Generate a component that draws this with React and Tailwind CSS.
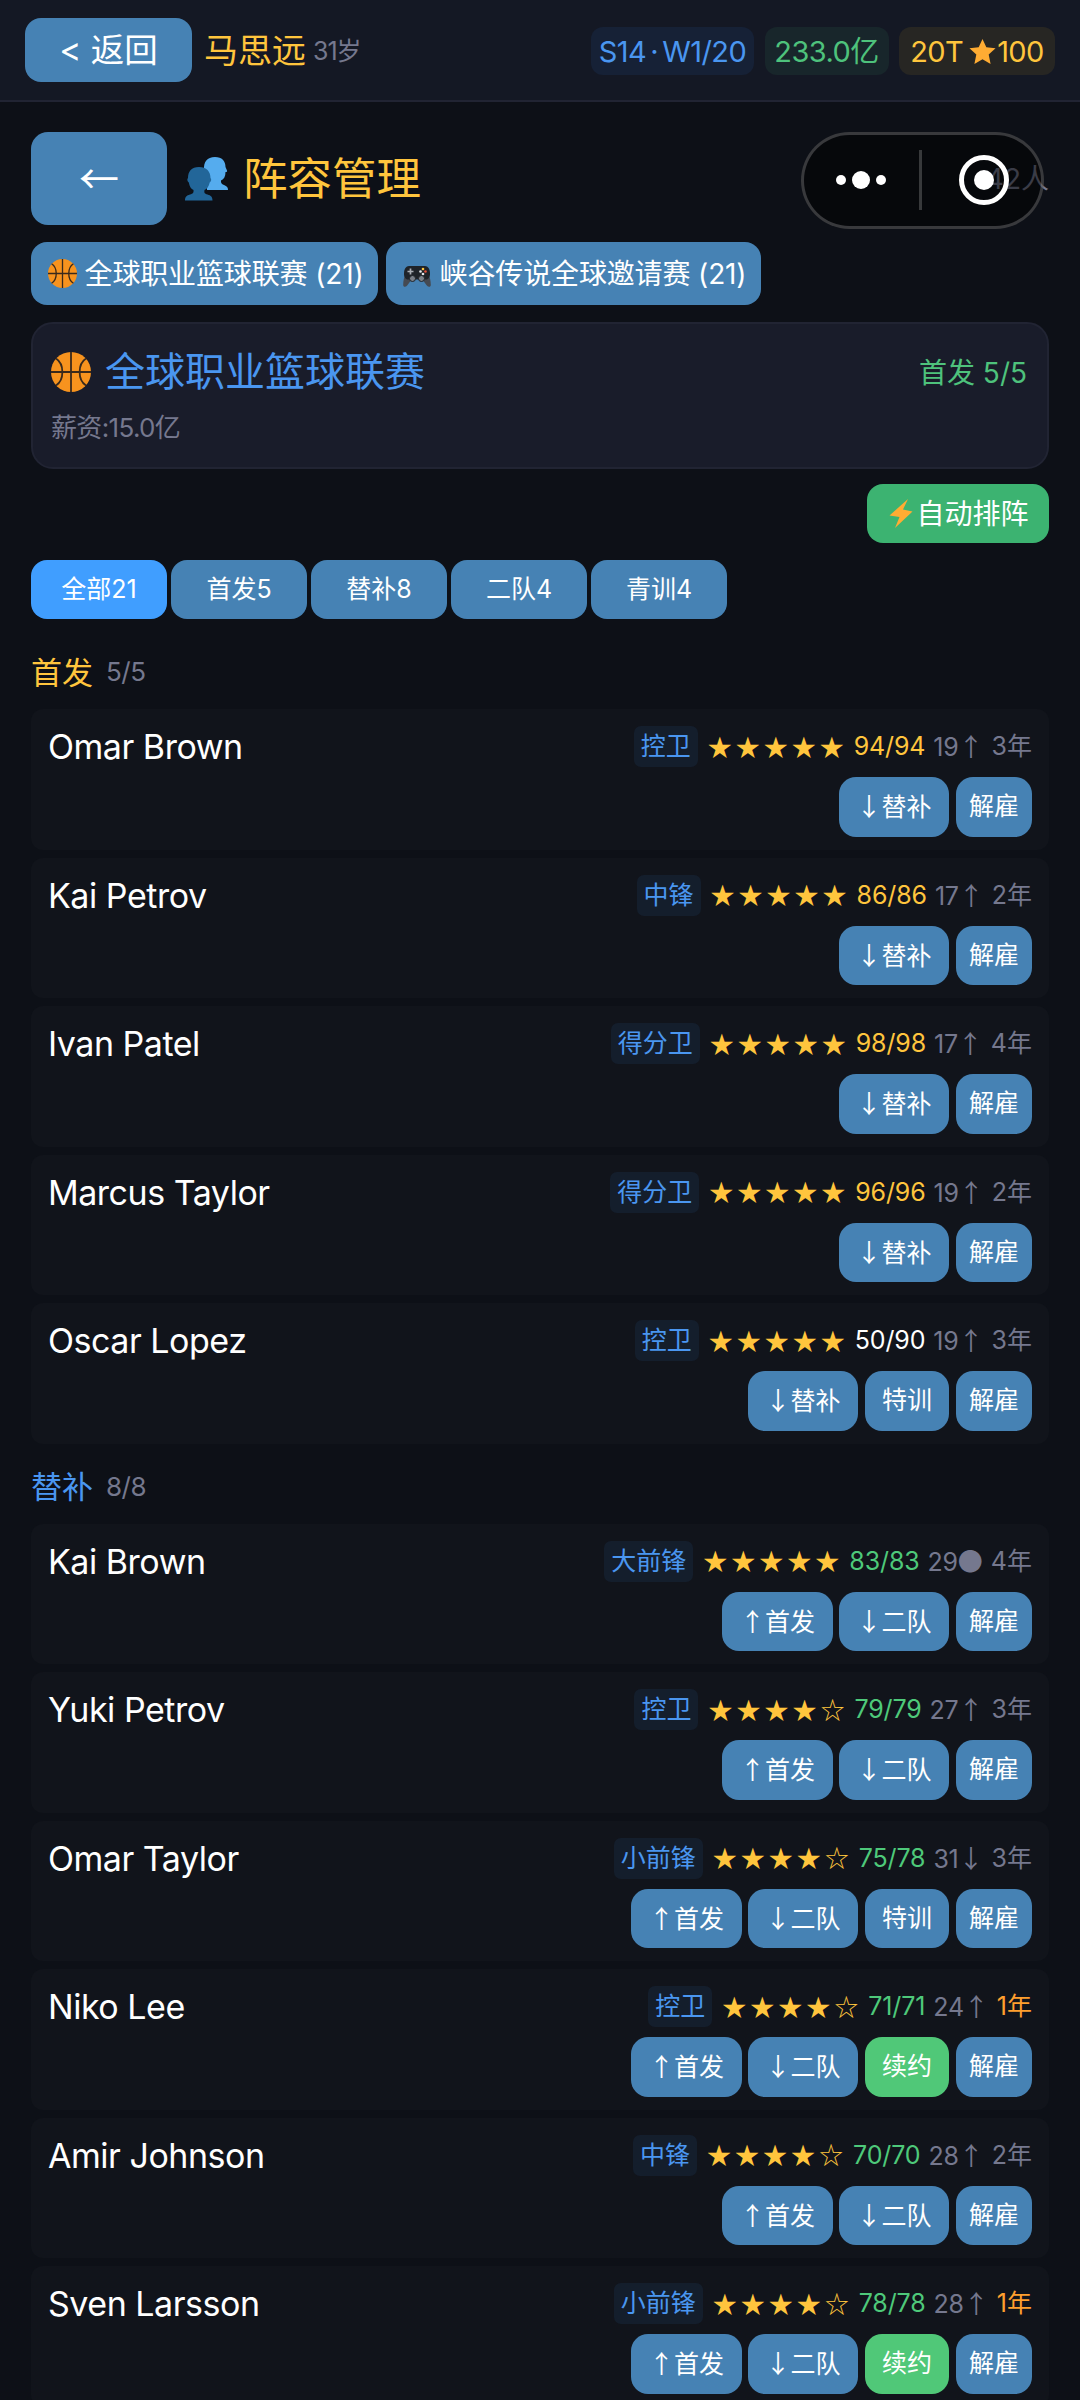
import React from 'react';

const starters = [
  { name: 'Omar Brown', pos: '控卫', stars: 5, score: '94/94', tone: 'gold', age: 19, trend: '↑', years: 3, actions: ['↓替补', '解雇'] },
  { name: 'Kai Petrov', pos: '中锋', stars: 5, score: '86/86', tone: 'gold', age: 17, trend: '↑', years: 2, actions: ['↓替补', '解雇'] },
  { name: 'Ivan Patel', pos: '得分卫', stars: 5, score: '98/98', tone: 'gold', age: 17, trend: '↑', years: 4, actions: ['↓替补', '解雇'] },
  { name: 'Marcus Taylor', pos: '得分卫', stars: 5, score: '96/96', tone: 'gold', age: 19, trend: '↑', years: 2, actions: ['↓替补', '解雇'] },
  { name: 'Oscar Lopez', pos: '控卫', stars: 5, score: '50/90', tone: 'white', age: 19, trend: '↑', years: 3, actions: ['↓替补', '特训', '解雇'] },
];

const bench = [
  { name: 'Kai Brown', pos: '大前锋', stars: 5, score: '83/83', tone: 'green', age: 29, trend: '●', years: 4, actions: ['↑首发', '↓二队', '解雇'] },
  { name: 'Yuki Petrov', pos: '控卫', stars: 4, score: '79/79', tone: 'green', age: 27, trend: '↑', years: 3, actions: ['↑首发', '↓二队', '解雇'] },
  { name: 'Omar Taylor', pos: '小前锋', stars: 4, score: '75/78', tone: 'green', age: 31, trend: '↓', years: 3, actions: ['↑首发', '↓二队', '特训', '解雇'] },
  { name: 'Niko Lee', pos: '控卫', stars: 4, score: '71/71', tone: 'green', age: 24, trend: '↑', years: 1, actions: ['↑首发', '↓二队', '续约', '解雇'] },
  { name: 'Amir Johnson', pos: '中锋', stars: 4, score: '70/70', tone: 'green', age: 28, trend: '↑', years: 2, actions: ['↑首发', '↓二队', '解雇'] },
  { name: 'Sven Larsson', pos: '小前锋', stars: 4, score: '78/78', tone: 'green', age: 28, trend: '↑', years: 1, actions: ['↑首发', '↓二队', '续约', '解雇'] },
];

const filters = ['全部21', '首发5', '替补8', '二队4', '青训4'];

const scoreTone = {
  gold: 'text-[#ffc53d]',
  white: 'text-white',
  green: 'text-[#4ec97a]',
};

function Basketball({ className }) {
  return (
    <svg viewBox="0 0 40 40" className={className}>
      <circle cx="20" cy="20" r="20" fill="#f7931e" />
      <g fill="none" stroke="#3a2a1c" strokeWidth="1.8">
        <path d="M20 0v40M0 20h40" />
        <path d="M5 6.500C13.500 12 13.500 28 5 33.500" />
        <path d="M35 6.500C26.500 12 26.500 28 35 33.500" />
      </g>
    </svg>
  );
}

function Gamepad({ className }) {
  return (
    <svg viewBox="0 0 28 22" className={className}>
      <path d="M3 8C1 12 .2 16 .2 20c0 2.300 2.500 2.200 4 .5L9 14h10l4.800 6.500c1.500 1.700 4 1.800 4-.5 0-4-.8-8-2.800-12z" fill="#454a52" />
      <path d="M6 1h16c3 0 4.800 3 5 7 .2 4-1.500 6.500-4 6.500H5c-2.500 0-4.200-2.500-4-6.500C1.200 4 3 1 6 1z" fill="#1f2328" />
      <path d="M7.500 3.500v6M4.500 6.500h6" stroke="#a9adb3" strokeWidth="1.700" />
      <circle cx="20" cy="4" r="1.300" fill="#ffc53d" />
      <circle cx="22.500" cy="6.500" r="1.300" fill="#e8503a" />
      <circle cx="17.500" cy="6.500" r="1.300" fill="#e6e8ea" />
      <circle cx="20" cy="9" r="1.300" fill="#e6e8ea" />
      <circle cx="9.500" cy="13.500" r="3" fill="#7a7f87" stroke="#1f2328" />
      <circle cx="18.500" cy="13.500" r="3" fill="#7a7f87" stroke="#1f2328" />
    </svg>
  );
}

function People({ className }) {
  return (
    <svg viewBox="0 0 43 44" className={className}>
      <path d="M30 0c7 0 10.500 4 10.500 10l1.500 3.500c.4 1-.2 1.500-1.500 1.500 0 4.500-1.500 7-4.500 8.500-.3 2.500.5 3.500 3 4.500 3 1.200 4 2.500 4 5H22V20l-3-7C18.500 5 22 0 30 0z" fill="#55acee" />
      <path d="M14 10c7.500 0 11.500 4.500 11.500 11 1.200 1 .8 3.500-.8 4.500-.9 4-2.700 6.500-5.200 7.500-.5 3 0 3.500 3 4.500 3.500 1 5 2.500 5 6H0c0-3.500 1.500-5 5-6 3-1 3.800-1.500 3.500-4.500-2.300-1-4-3.500-4.700-7.500-1.500-1-2-3.500-.8-4.500C3 14.500 6.500 10 14 10z" fill="#226699" />
    </svg>
  );
}

function TopBar() {
  return (
    <header className="flex h-[102px] items-center justify-between border-b-2 border-[#212433] bg-[#141824] px-[25px]">
      <div className="flex items-center">
        <button className="h-16 w-[167px] rounded-[16px] bg-[#4682b4] pt-0.5 text-[33.5px] text-white">&lt; 返回</button>
        <span className="ml-3 pt-0.5 text-[34px] text-[#ffc53d]">马思远</span>
        <span className="ml-[7px] pt-0.5 text-[25px] tracking-[-0.04em] text-[#75788e]">31岁</span>
      </div>
      <div className="flex gap-[10.5px] pt-px text-[29px] tracking-[-0.02em]">
        <span className="flex h-12 w-[163px] items-center justify-center rounded-xl bg-[#162136] pt-px text-[#4a96f0]">S14<span className="w-4 text-center">·</span>W1/20</span>
        <span className="flex h-12 w-[124px] items-center justify-center rounded-xl bg-[#18262b] pt-px text-[#4ec27c]">233.0亿</span>
        <span className="flex h-12 w-[156px] items-center justify-center rounded-xl bg-[#272623] pt-px text-[#ffc53d]">
          20T
          <svg viewBox="0 0 24 24" className="mr-px ml-1.5 size-[27px]">
            <path d="M12 .8l3.400 7.500 8.200.9-6.100 5.500 1.700 8.300L12 18.900 4.800 23l1.700-8.300L.4 9.200l8.200-.9z" fill="#ffac33" />
          </svg>
          100
        </span>
      </div>
    </header>
  );
}

function Capsule() {
  return (
    <div className="absolute top-[131.500px] left-[801px] flex h-[97px] w-[243px] items-center rounded-full border-[3px] border-white/20 bg-black/50">
      <div className="flex flex-1 items-center justify-center gap-1.5">
        <span className="size-2.5 rounded-full bg-white" />
        <span className="size-[18px] rounded-full bg-white" />
        <span className="size-2.5 rounded-full bg-white" />
      </div>
      <div className="h-[60px] w-[3px] bg-white/20" />
      <div className="flex flex-1 items-center justify-center pl-[5px]">
        <span className="flex size-[50px] items-center justify-center rounded-full border-[5px] border-white">
          <span className="size-5 rounded-full bg-white" />
        </span>
      </div>
    </div>
  );
}

function Arrow({ children }) {
  return <span className="font-['Noto_Sans_CJK_SC',sans-serif] tracking-normal">{children}</span>;
}

function ActionButton({ label }) {
  const hasArrow = label.length === 3;
  const width = label[0] === '↑' ? 'w-[111px] -mr-px' : hasArrow ? 'w-[110px]' : label === '解雇' ? 'w-[76px]' : 'w-[84px]';
  const color = label === '续约' ? 'bg-[#50c878]' : 'bg-[#4682b4]';
  return (
    <button className={'h-[59.5px] rounded-[17px] text-[25px] text-white ' + width + ' ' + color}>
      {hasArrow && <Arrow>{label[0]}</Arrow>}
      {hasArrow ? label.slice(1) : label}
    </button>
  );
}

function PlayerRow({ player }) {
  return (
    <div className="flex h-[140.5px] justify-between rounded-xl bg-[#11141b] px-[17px] pt-[17px]">
      <span className="h-[41px] text-[34px] leading-[41px] tracking-[-0.014em] text-white">{player.name}</span>
      <div className="flex flex-col items-end gap-[10px]">
        <div className="flex h-[41px] items-center gap-2 text-[25px] text-[#75788e]">
          <span className="flex h-[41px] items-center rounded-[7px] bg-[#141e2c] px-[7px] text-[#4a96f0]">{player.pos}</span>
          <span className="flex pb-0.5 text-[24px] text-[#ffc53d]">
            {[1, 2, 3, 4, 5].map(n => (
              <span key={n} className="w-7 text-center font-['Noto_Sans_CJK_SC',sans-serif]">{n <= player.stars ? '★' : '☆'}</span>
            ))}
          </span>
          <span className={'tracking-[-0.005em] ' + scoreTone[player.tone]}>{player.score}</span>
          <span className="tracking-[-0.01em]">{player.age}<Arrow>{player.trend}</Arrow></span>
          <span className={player.years === 1 ? 'text-[#ff9f2e]' : ''}>{player.years}年</span>
        </div>
        <div className="flex gap-[7px]">
          {player.actions.map(label => <ActionButton key={label} label={label} />)}
        </div>
      </div>
    </div>
  );
}

function Section({ title, titleClass, count, players }) {
  return (
    <section>
      <div className="mt-[23px] mb-[17px] flex h-10 items-center gap-[13px]">
        <h3 className={'text-[31px] ' + titleClass}>{title}</h3>
        <span className="text-[26px] tracking-[-0.02em] text-[#75788e]">{count}</span>
      </div>
      <div className="flex flex-col gap-2">
        {players.map(player => <PlayerRow key={player.name} player={player} />)}
      </div>
    </section>
  );
}

export default function App() {
  return (
    <div className="relative h-[2400px] w-[1080px] overflow-hidden bg-[#0d1017] font-['Inter','Noto_Sans_CJK_SC',sans-serif] leading-none whitespace-nowrap">
      <TopBar />
      <main className="px-[31px] pt-[30px]">
        <div className="flex h-[93px] items-center">
          <button className="h-full w-[136px] rounded-[17px] bg-[#4682b4] pb-1 font-['Noto_Sans_CJK_SC',sans-serif] text-[40px] text-white">←</button>
          <People className="ml-[18px] h-11 w-[43px]" />
          <h1 className="ml-[15px] pt-0.5 text-[44.5px] text-[#ffc53d]">阵容管理</h1>
          <span className="ml-auto text-[28px] text-[#75788e]">42人</span>
        </div>

        <div className="mt-[17px] flex gap-2 text-[28px] tracking-[-0.005em] text-white">
          <button className="flex h-[63px] w-[347px] items-center justify-center gap-2 rounded-[16px] bg-[#4682b4] pl-0.5">
            <Basketball className="size-[29px]" />
            全球职业篮球联赛 (21)
          </button>
          <button className="flex h-[63px] w-[375px] items-center justify-center gap-[9px] rounded-[16px] bg-[#4682b4] pl-0.5">
            <Gamepad className="mt-1 h-[22px] w-7" />
            峡谷传说全球邀请赛 (21)
          </button>
        </div>

        <div className="mt-[17px] h-[147px] rounded-[22px] border-2 border-[#212433] bg-[#191c2a] px-[18px] pt-[28px]">
          <div className="flex items-center justify-between">
            <h2 className="flex items-center text-[40px] text-[#4a96f0]">
              <Basketball className="mr-[14px] size-10" />
              全球职业篮球联赛
            </h2>
            <span className="mr-0.5 pt-0.5 text-[28px] text-[#4ec27c]">首发 5/5</span>
          </div>
          <p className="mt-[23px] text-[26px] tracking-[-0.025em] text-[#75788e]">薪资:15.0亿</p>
        </div>

        <div className="mt-[15px] flex justify-end">
          <button className="flex h-[59px] w-[182px] items-center justify-center rounded-[16px] bg-[#3cb371] pl-0.5 text-[28px] text-white">
            <svg viewBox="0 0 24 29" className="mr-[3px] h-[29px] w-6">
              <path d="M19 0L.5 16.500l10 1.500L6 29 23.500 12.500l-9.500-2z" fill="#ffac33" />
            </svg>
            自动排阵
          </button>
        </div>

        <div className="mt-[17px] mb-[33px] flex gap-1">
          {filters.map((label, index) => (
            <button key={label} className={'h-[59px] w-[136px] rounded-[16px] text-[25px] text-white ' + (index === 0 ? 'bg-[#409eff]' : 'bg-[#4682b4]')}>{label}</button>
          ))}
        </div>

        <Section title="首发" titleClass="text-[#ffc53d]" count="5/5" players={starters} />
        <Section title="替补" titleClass="text-[#4a96f0]" count="8/8" players={bench} />
      </main>
      <Capsule />
    </div>
  );
}
